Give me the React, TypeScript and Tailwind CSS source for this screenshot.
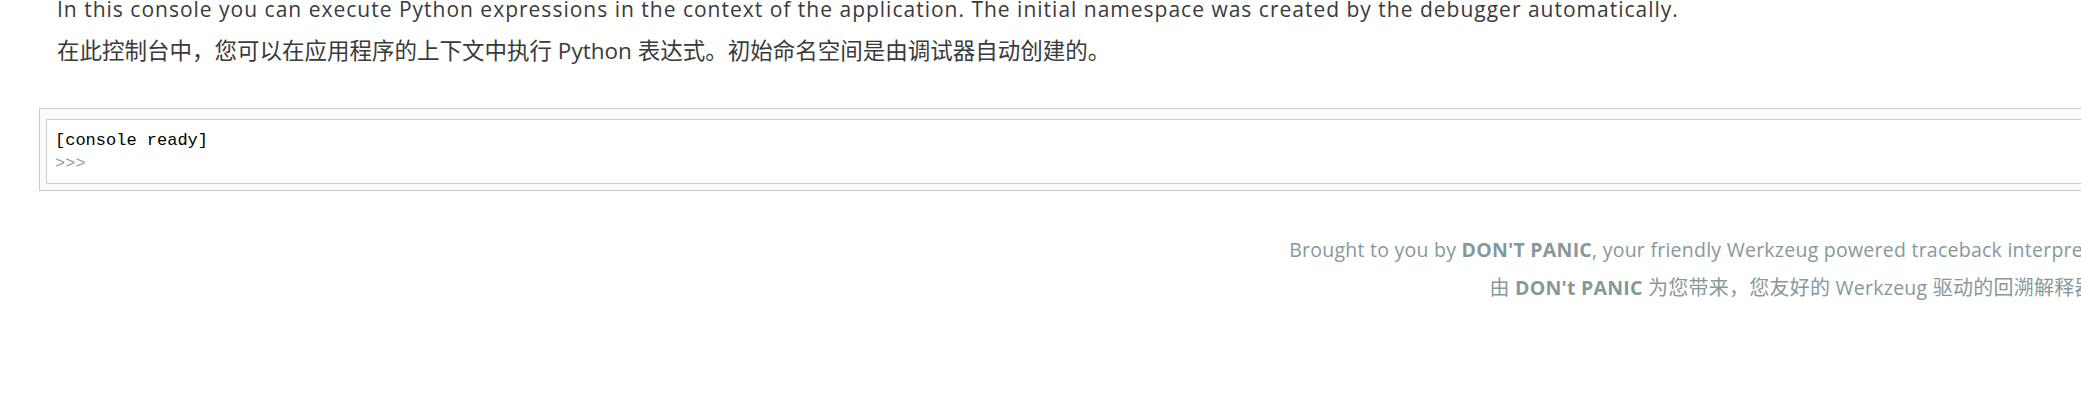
const sans = "font-['Open_Sans','Noto_Sans_CJK_SC',sans-serif]";

function Intro() {
  return (
    <div className="pl-[18px] text-[#3a3a3a]">
      <p className={`${sans} text-[21px] leading-[28px] tracking-[1px]`}>
        In this console you can execute Python expressions in the context of the application. The initial namespace
        was created by the debugger automatically.
      </p>
      <p className={`${sans} mt-[13px] text-[22.5px] leading-[30px]`}>
        在此控制台中，您可以在应用程序的上下文中执行 Python 表达式。初始命名空间是由调试器自动创建的。
      </p>
    </div>
  );
}

function Console() {
  return (
    <div className="mt-[42px] border border-[#ccc] bg-[#fafafa] px-[6px] pt-[10px] pb-[6px]">
      <div className="border border-[#ccc] bg-white px-[8px] pt-[9px] pb-[8px] font-['Liberation_Mono',monospace] text-[17px] leading-[23px]">
        <div className="text-black">[console ready]</div>
        <div className="text-[#9a9a9a]">&gt;&gt;&gt;</div>
      </div>
    </div>
  );
}

function Footer() {
  return (
    <div className={`${sans} mt-[46px] text-right text-[19.5px] leading-[26px] tracking-[0.25px] text-[#86989b]`}>
      <p>
        Brought to you by <strong className="font-bold">DON'T PANIC</strong>, your friendly Werkzeug powered
        traceback interpreter.
      </p>
      <p className="mt-[12px]">
        <span className="text-[20px]">由</span> <strong className="font-bold">DON't PANIC</strong>{" "}
        <span className="text-[20px]">为您带来，您友好的</span> Werkzeug{" "}
        <span className="text-[20px]">驱动的回溯解释器。</span>
      </p>
    </div>
  );
}

export default function App() {
  return (
    <div className="h-[413px] w-full overflow-hidden bg-white">
      <div className="-mt-[5px] w-[2154px] px-[39px]">
        <Intro />
        <Console />
        <Footer />
      </div>
    </div>
  );
}
